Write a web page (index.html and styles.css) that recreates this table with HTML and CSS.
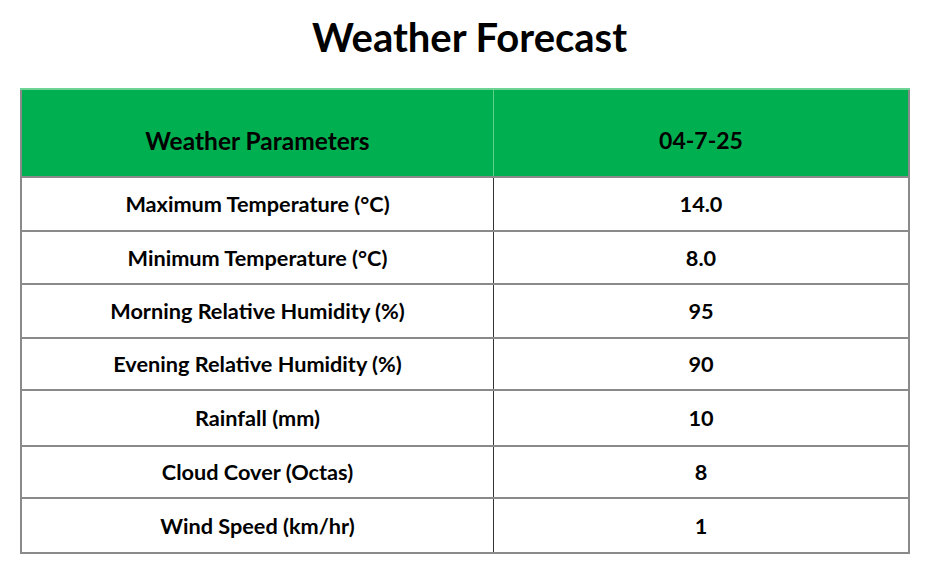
FILE: index.html
```html
<!DOCTYPE html>
<html>
<head>
<meta charset="utf-8">
<link rel="stylesheet" href="styles.css">
</head>
<body>
<main class="page">
  <h1 class="title">Weather Forecast</h1>
  <table class="forecast">
    <thead>
      <tr><th class="param">Weather Parameters</th><th class="val">04-7-25</th></tr>
    </thead>
    <tbody>
      <tr class="r1"><td>Maximum Temperature (°C)</td><td>14.0</td></tr>
      <tr class="r2"><td>Minimum Temperature (°C)</td><td>8.0</td></tr>
      <tr class="r3"><td>Morning Relative Humidity (%)</td><td>95</td></tr>
      <tr class="r4"><td>Evening Relative Humidity (%)</td><td>90</td></tr>
      <tr class="r5"><td>Rainfall (mm)</td><td>10</td></tr>
      <tr class="r6"><td>Cloud Cover (Octas)</td><td>8</td></tr>
      <tr class="r7"><td>Wind Speed (km/hr)</td><td>1</td></tr>
    </tbody>
  </table>
</main>
</body>
</html>
```
FILE: styles.css
```css
html, body {
  margin: 0;
  padding: 0;
  background: #ffffff;
}
body {
  font-family: Lato, "Open Sans", sans-serif;
  color: #000;
}
.page {
  width: 930px;
  height: 570px;
  padding: 0 20px;
  box-sizing: border-box;
}
.title {
  margin: 0;
  padding: 12px 0 0 9px;
  height: 74px;
  box-sizing: border-box;
  text-align: center;
  font-size: 40px;
  font-weight: 700;
  line-height: 50px;
}
.forecast {
  width: 890px;
  border-collapse: collapse;
  table-layout: fixed;
  border: 2px solid #8a8a8a;
  margin-top: 14px;
}
.forecast th, .forecast td {
  text-align: center;
  font-weight: 700;
  padding: 0;
}
.forecast thead th {
  background: #00b050;
  height: 72px;
  padding-top: 14px;
  font-size: 24.5px;
  border: 1px solid #5fcf8a;
  border-top: 2px solid #6ed495;
}
.forecast thead th.val { font-size: 23px; }
.forecast th.param { width: 471px; }
.forecast td {
  font-size: 21.7px;
  border-top: 2px solid #8a8a8a;
  border-bottom: 2px solid #8a8a8a;
  height: 52px;
}
.forecast td:first-child {
  border-right: 1px solid #333;
  border-left: 2px solid #8a8a8a;
}
.forecast td:last-child {
  border-right: 2px solid #8a8a8a;
}
.forecast tr.r1 td { height: 52px; }
.forecast tr.r2 td { height: 51px; }
.forecast tr.r3 td { height: 52px; }
.forecast tr.r4 td { height: 50px; }
.forecast tr.r5 td { height: 54px; }
.forecast tr.r6 td { height: 50px; }
.forecast tr.r7 td { height: 53px; }
```
